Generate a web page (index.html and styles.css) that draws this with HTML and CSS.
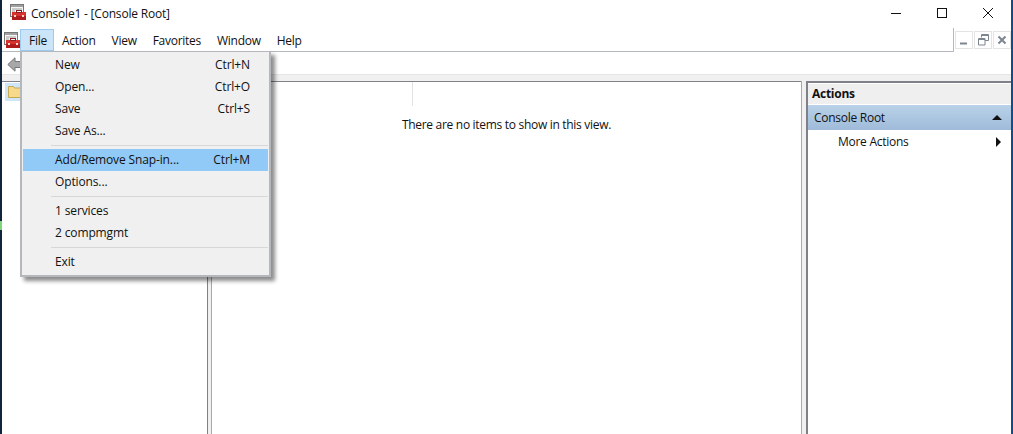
FILE: index.html
```html
<!DOCTYPE html>
<html lang="en">
<head>
<meta charset="utf-8">
<title>Console1 - [Console Root]</title>
<link rel="stylesheet" href="styles.css">
</head>
<body>
<div class="desktop-mark"></div>
<div class="window">
  <header class="titlebar">
    <svg class="app-icon" viewBox="0 0 16 16" width="16" height="16">
      <rect x="0.5" y="0.5" width="13" height="12" fill="#f6f6f6" stroke="#777"/>
      <rect x="1" y="1" width="12" height="2" fill="#a0a0a0"/>
      <path d="M2 5h10M2 7h3" stroke="#a0a0a0"/>
      <rect x="2" y="8" width="14" height="8" fill="#b01c1c"/>
      <rect x="2" y="8" width="14" height="4" fill="#d8322e"/>
      <rect x="6.500" y="6.500" width="5" height="2" fill="#f6f6f6" stroke="#8a2020"/>
      <rect x="4" y="11" width="2" height="2" fill="#f2d8c8"/>
      <rect x="12" y="11" width="2" height="2" fill="#f2d8c8"/>
    </svg>
    <span class="title">Console1 - [Console Root]</span>
    <div class="caption">
      <svg class="cap-btn" viewBox="0 0 46 12" width="46" height="12"><path d="M18 6.5h10" stroke="#111"/></svg>
      <svg class="cap-btn" viewBox="0 0 46 12" width="46" height="12"><rect x="18.5" y="1.5" width="9" height="9" fill="none" stroke="#111"/></svg>
      <svg class="cap-btn" viewBox="0 0 46 12" width="46" height="12"><path d="M18 1l10 10M28 1L18 11" stroke="#111" fill="none"/></svg>
    </div>
  </header>

  <nav class="menubar">
    <svg class="app-icon small" viewBox="0 0 16 16" width="16" height="16">
      <rect x="0.5" y="0.5" width="13" height="12" fill="#f6f6f6" stroke="#777"/>
      <rect x="1" y="1" width="12" height="2" fill="#a0a0a0"/>
      <path d="M2 5h10M2 7h3" stroke="#a0a0a0"/>
      <rect x="2" y="8" width="14" height="8" fill="#b01c1c"/>
      <rect x="2" y="8" width="14" height="4" fill="#d8322e"/>
      <rect x="6.500" y="6.500" width="5" height="2" fill="#f6f6f6" stroke="#8a2020"/>
      <rect x="4" y="11" width="2" height="2" fill="#f2d8c8"/>
      <rect x="12" y="11" width="2" height="2" fill="#f2d8c8"/>
    </svg>
    <span class="menu-top active">File</span>
    <span class="menu-top">Action</span>
    <span class="menu-top">View</span>
    <span class="menu-top">Favorites</span>
    <span class="menu-top">Window</span>
    <span class="menu-top">Help</span>
    <div class="mdi">
      <span class="mdi-btn"><svg viewBox="0 0 16 16" width="16" height="16"><path d="M4 11.500h7" stroke="#7d8590" stroke-width="2"/></svg></span>
      <span class="mdi-btn"><svg viewBox="0 0 16 16" width="16" height="16"><path d="M6.500 5.500V2.500h7v6H10M3.500 6.500h6.500v6.500H3.500z" fill="none" stroke="#7d8590"/><path d="M3 7.500h7M6 3.500h8" stroke="#7d8590"/></svg></span>
      <span class="mdi-btn"><svg viewBox="0 0 16 16" width="16" height="16"><path d="M4.500 4.500l7 7M11.500 4.500l-7 7" stroke="#7d8590" stroke-width="2"/></svg></span>
    </div>
  </nav>

  <div class="toolbar">
    <svg viewBox="0 0 16 15" width="16" height="15"><path d="M8 .8L.8 7.500 8 14.200V10.500h8v-6H8z" fill="#a8a8a8" stroke="#777"/></svg>
  </div>
  <div class="strip"></div>

  <main class="panes">
    <section class="tree">
      <div class="tree-sel">
        <svg viewBox="0 0 15 13" width="15" height="13"><path d="M0.500 12.500V1.500h5l1 1.500h8v9.500z" fill="#f6d98a" stroke="#c9a850"/></svg>
      </div>
    </section>
    <div class="splitter"></div>
    <section class="list">
      <div class="list-head"><span class="col-sep"></span></div>
      <p class="empty">There are no items to show in this view.</p>
    </section>
    <div class="splitter right"></div>
    <aside class="actions">
      <div class="actions-title">Actions</div>
      <div class="actions-group">
        <span>Console Root</span>
        <span class="tri-up"></span>
      </div>
      <div class="actions-item">
        <span>More Actions</span>
        <span class="tri-right"></span>
      </div>
    </aside>
  </main>
</div>

<div class="file-menu">
  <div class="item"><span>New</span><span>Ctrl+N</span></div>
  <div class="item"><span>Open...</span><span>Ctrl+O</span></div>
  <div class="item"><span>Save</span><span>Ctrl+S</span></div>
  <div class="item"><span>Save As...</span></div>
  <div class="sep"></div>
  <div class="item hot"><span>Add/Remove Snap-in...</span><span>Ctrl+M</span></div>
  <div class="item"><span>Options...</span></div>
  <div class="sep"></div>
  <div class="item"><span>1 services</span></div>
  <div class="item"><span>2 compmgmt</span></div>
  <div class="sep"></div>
  <div class="item"><span>Exit</span></div>
</div>
</body>
</html>
```
FILE: styles.css
```css
* { box-sizing: border-box; }
html, body { margin: 0; height: 100%; }
body {
  width: 1013px;
  height: 434px;
  overflow: hidden;
  background: #10243c;
  font: 12px "Open Sans", "Noto Sans", sans-serif;
  letter-spacing: -0.27px;
  color: #111;
  position: relative;
}
.desktop-mark {
  position: absolute;
  left: 0;
  top: 221px;
  width: 2px;
  height: 9px;
  background: #7fd67a;
}
.window {
  margin-left: 2px;
  width: 1009px;
  height: 434px;
  background: #fff;
  display: flex;
  flex-direction: column;
  box-shadow: 2px 0 0 #0b4f91;
}
.titlebar {
  height: 28px;
  display: flex;
  align-items: center;
  padding-left: 8px;
  background: #fff;
}
.title { margin-left: 5px; padding-bottom: 2px; letter-spacing: -0.2px; }
.app-icon { flex: none; margin-top: -4px; }
.caption { margin-left: auto; display: flex; margin-top: -2px; }
.cap-btn { display: block; }
.menubar {
  height: 24px;
  display: flex;
  align-items: flex-start;
  border-bottom: 1px solid #b4b8c0;
  padding-left: 2px;
  position: relative;
}
.menubar .app-icon.small { margin: 4px 0 0 0; }
.menu-top {
  padding: 0 8px;
  display: flex;
  align-items: center;
  height: 22px;
  margin-top: 1px;
}
.menu-top.active {
  background: #cce4f7;
  border: 1px solid #9ccbef;
  padding: 0 6px 0 8px;
}
.mdi {
  position: absolute;
  right: 0;
  top: 0;
  height: 24px;
  width: 58px;
  background: #fff;
  border-left: 1px solid #b4b8c0;
  display: flex;
  gap: 1px;
  padding: 3px 0 0 1px;
}
.mdi-btn {
  width: 18px;
  height: 18px;
  border: 1px solid #e4e4e4;
  display: flex;
  align-items: center;
  justify-content: center;
}
.toolbar {
  height: 22px;
  padding: 5px 0 0 5px;
  background: #fff;
}
.toolbar svg { display: block; }
.strip {
  height: 7px;
  background: #f0f0f0;
  border-top: 1px solid #e6e6e6;
}
.panes {
  flex: 1;
  display: flex;
  min-height: 0;
  background: #f0f0f0;
}
.tree {
  width: 205px;
  background: #fff;
  border-top: 1px solid #808088;
  padding: 1px 0 0 3px;
}
.tree-sel {
  width: 40px;
  height: 18px;
  background: #cfe5f8;
  padding: 2px 0 0 3px;
}
.tree-sel svg { display: block; }
.splitter {
  width: 5px;
  background: #f0f0f0;
  border-left: 1px solid #808088;
  border-right: 1px solid #a8a8b0;
}
.splitter.right {
  width: 7px;
  border-left-color: #a8a8b0;
  border-right: 2px solid #808088;
}
.list {
  width: 589px;
  background: #fff;
  border-top: 1px solid #808088;
  display: flex;
  flex-direction: column;
}
.list-head {
  height: 24px;
  flex: none;
  padding-left: 200px;
}
.col-sep {
  display: block;
  width: 1px;
  height: 24px;
  background: #e2e2e2;
}
.empty {
  margin: 10px 0 0;
  text-align: center;
  line-height: 18px;
  letter-spacing: -0.3px;
}
.actions {
  flex: 1;
  background: #fff;
  border-top: 2px solid #808088;
}
.actions-title {
  height: 20px;
  background: #efefef;
  font-weight: 700;
  padding: 1px 0 0 4px;
  margin-top: 1px;
}
.actions-group {
  height: 25px;
  margin-top: 1px;
  background: linear-gradient(#b9d2e9, #9fbbd9);
  display: flex;
  align-items: center;
  justify-content: space-between;
  padding: 0 9px 0 6px;
}
.tri-up {
  width: 0;
  height: 0;
  border-left: 5px solid transparent;
  border-right: 5px solid transparent;
  border-bottom: 5px solid #111;
}
.actions-item {
  height: 24px;
  display: flex;
  align-items: center;
  justify-content: space-between;
  padding: 0 10px 1px 30px;
}
.tri-right {
  width: 0;
  height: 0;
  border-top: 5px solid transparent;
  border-bottom: 5px solid transparent;
  border-left: 5px solid #111;
}
.file-menu {
  position: absolute;
  left: 20px;
  top: 51px;
  width: 251px;
  height: 226px;
  background: #f0f0f0;
  border: 2px solid #b4b8bc;
  border-width: 1px 2px 2px 2px;
  padding: 2px 1px;
  box-shadow: 4px 4px 4px rgba(0, 0, 0, 0.45);
  letter-spacing: -0.13px;
}
.item {
  height: 22px;
  display: flex;
  align-items: center;
  justify-content: space-between;
  padding: 0 18px 1px 32px;
}
.item.hot { background: #91c9f7; }
.sep {
  height: 1px;
  background: #d7d7d7;
  margin: 3px 0 3px 28px;
}
```
